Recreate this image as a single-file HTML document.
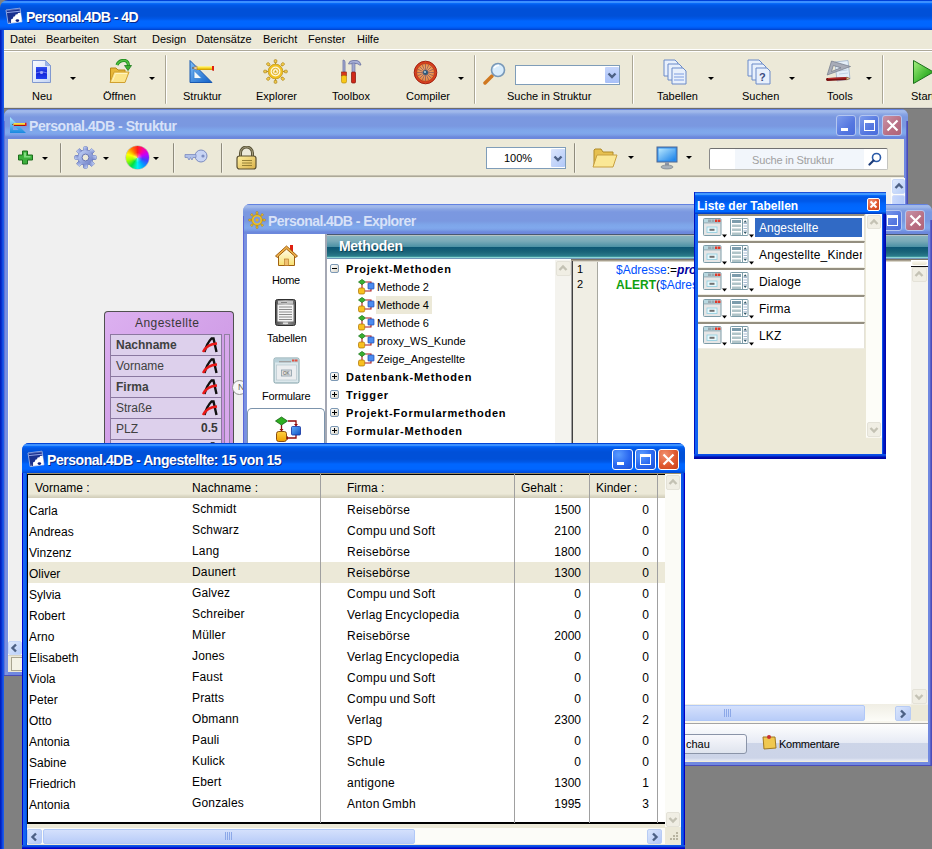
<!DOCTYPE html>
<html><head><meta charset="utf-8">
<style>
*{margin:0;padding:0;box-sizing:border-box}
html,body{width:932px;height:849px;overflow:hidden;background:#808080;font-family:"Liberation Sans",sans-serif;font-size:11px;color:#000}
.a{position:absolute}
.t{position:absolute;white-space:nowrap;line-height:1}
/* main window */
#mtitle{left:0;top:0;width:932px;height:30px;border-top-left-radius:8px;background:linear-gradient(#0040d8 0,#0040d8 1px,#3c90ff 1px,#3c90ff 3px,#0a70ff 3px,#0058e8 5px,#0050d8 9px,#0050d8 16px,#0058e8 19px,#0066ff 21px,#0066ff 26px,#0058f0 28px,#0040c8 30px)}
#mleft{left:0;top:30px;width:4px;height:819px;background:linear-gradient(90deg,#0019b0,#0a36d8 2px,#1a5ae8 3px)}
#menu{left:4px;top:30px;width:928px;height:22px;background:#ece9d8}
#tbar{left:4px;top:52px;width:928px;height:56px;background:#ece9d8}
.sep{position:absolute;width:2px;border-radius:1px;background:linear-gradient(90deg,#8e8b7c 1px,#f4f2e8 1px)}
.arr{position:absolute;width:0;height:0;border-left:3px solid transparent;border-right:3px solid transparent;border-top:3px solid #000}

.ib{position:absolute;width:20px;height:21px;border:1px solid #b4c6f0;border-radius:3px;background:linear-gradient(135deg,#7d9cec,#5577e0 60%,#4a6cdc)}
.ibc{background:linear-gradient(135deg,#c893a8,#b86e82 60%,#b06478)}
.ab{position:absolute;width:21px;height:21px;border:1px solid #fff;border-radius:3px;background:radial-gradient(circle at 30% 25%,#5a9cff,#2a68f0 55%,#1c50d8)}
.abc{background:radial-gradient(circle at 30% 25%,#f09070,#e05a30 55%,#c8401a)}
.gmin{position:absolute;background:#fff}
.ititle{background:linear-gradient(#6282e0 0,#6282e0 1px,#a0b8ea 1px,#a0b8ea 3px,#8aa6e4 5px,#7b98e0 8px,#7a98e0 17px,#7ea6ea 21px,#80a8ec 24px,#7a9ee6 26px,#6c88dc 28px,#6c88dc 30px)}
.iframe{background:linear-gradient(90deg,#6a80dc 0,#7c94e0 1px,#7c94e0 100%)}
.xx{position:absolute}


.atitle{background:linear-gradient(#0044d8 0,#0044d8 1px,#3c90ff 1px,#3c90ff 3px,#0a70ff 3px,#0058e8 5px,#0050d8 9px,#0050d8 16px,#0058e8 19px,#0066ff 21px,#0066ff 26px,#0058f0 28px,#0048d0 30px)}
.pal1{fill:#e8ecec}

.lbl{position:absolute;white-space:nowrap;line-height:1;font-size:11px;margin-top:1px}
</style></head><body>

<!-- MAIN WINDOW -->
<div id="mtitle" class="a"></div>
<div class="t" style="left:26px;top:10px;font-size:14px;letter-spacing:-0.55px;font-weight:bold;color:#fff;text-shadow:1px 1px 0 #0a2a8a">Personal.4DB - 4D</div>
<div id="mleft" class="a"></div>
<div id="menu" class="a"></div>
<div class="a" style="left:4px;top:49px;width:928px;height:3px;background:linear-gradient(#fff 1px,#aca899 1px,#aca899 2px,#fff 2px)"></div>
<div class="t" style="left:10px;top:34px">Datei</div>
<div class="t" style="left:46px;top:34px">Bearbeiten</div>
<div class="t" style="left:113px;top:34px">Start</div>
<div class="t" style="left:152px;top:34px">Design</div>
<div class="t" style="left:196px;top:34px">Datensätze</div>
<div class="t" style="left:263px;top:34px">Bericht</div>
<div class="t" style="left:308px;top:34px">Fenster</div>
<div class="t" style="left:357px;top:34px">Hilfe</div>

<div id="tbar" class="a"></div>
<div class="a" style="left:4px;top:107px;width:928px;height:1px;background:#d8d6cc"></div><div class="a" style="left:4px;top:108px;width:928px;height:1px;background:#6c6c6c"></div>


<!-- STRUKTUR WINDOW -->
<div class="a" style="left:4px;top:109px;width:904px;height:567px;background:#7c94e0;border-radius:7px 7px 0 0"></div>
<div class="a ititle" style="left:4px;top:109px;width:904px;height:30px;border-radius:7px 7px 0 0"></div>

<div class="a" style="left:4px;top:121px;width:1px;height:555px;background:#6070d8"></div>
<div class="a" style="left:5px;top:139px;width:3px;height:533px;background:#7890e0"></div>
<div class="a" style="left:904px;top:139px;width:2px;height:536px;background:#7088e0"></div>
<div class="a" style="left:906px;top:121px;width:1px;height:555px;background:#5a64c8"></div>
<div class="a" style="left:907px;top:121px;width:1px;height:555px;background:#4a4cb8"></div>
<div class="a" style="left:8px;top:672px;width:898px;height:3px;background:#7088e0"></div>
<div class="a" style="left:4px;top:675px;width:904px;height:1px;background:#4a4cb8"></div>

<svg class="a" style="left:9px;top:116px" width="19" height="18" viewBox="0 0 19 18"><defs><linearGradient id="sq2" x1="0" y1="0" x2="0" y2="1"><stop offset="0" stop-color="#b0e8ff"/><stop offset="1" stop-color="#1888e0"/></linearGradient></defs><path d="M1 1 L17 17 H1 Z M4 8.5 V14 H9.5 Z" fill="url(#sq2)" fill-rule="evenodd"/><path d="M5 7 H17 V9.5 H5Z" fill="#f8e040"/><path d="M5 8.8 H17 V10 H5Z" fill="#b01008"/><path d="M16 6.8 H17.5 V10 H16Z" fill="#e01818"/><path d="M5 7 L3 8.4 L5 10Z" fill="#c8a060"/><path d="M2.8 8.4 L3.8 7.9 V8.9Z" fill="#202020"/></svg>
<div class="t" style="left:29px;top:119px;font-size:14px;letter-spacing:-0.45px;font-weight:bold;color:#d8e2f8">Personal.4DB - Struktur</div>
<div class="ib" style="left:836px;top:115px"></div><div class="gmin" style="left:841px;top:128px;width:7px;height:3px"></div>
<div class="ib" style="left:859px;top:115px"></div><div class="a" style="left:864px;top:120px;width:11px;height:11px;border:1px solid #fff;border-top-width:3px"></div>
<div class="ib ibc" style="left:882px;top:115px"></div>
<svg class="a" style="left:886px;top:119px" width="13" height="13" viewBox="0 0 13 13"><path d="M1.5 1.5 L11.5 11.5 M11.5 1.5 L1.5 11.5" stroke="#fff" stroke-width="2.2"/></svg>
<!-- struktur toolbar -->
<div class="a" style="left:8px;top:139px;width:896px;height:36px;background:#ece9d8"></div>
<div class="a" style="left:8px;top:175px;width:896px;height:3px;background:linear-gradient(#c4c0b0 0,#c4c0b0 1px,#aca898 1px,#aca898 2px,#f0eee2 2px)"></div>
<svg class="a" style="left:17px;top:150px" width="17" height="15" viewBox="0 0 17 15"><path d="M5.5 1 H10.5 V5 H15.5 V10 H10.5 V14 H5.5 V10 H1.5 V5 H5.5 Z" fill="#3cb03c" stroke="#1e6e1e" stroke-linejoin="round"/><path d="M7 2.5 H9 V6 H13.5 V7.5 H7Z" fill="#80dc80"/></svg>
<div class="arr" style="left:42px;top:157px"></div>
<div class="sep" style="left:60px;top:143px;height:30px"></div>
<svg class="a" style="left:74px;top:146px" width="23" height="23" viewBox="0 0 23 23"><defs><linearGradient id="gg" x1="0" y1="0" x2="1" y2="1"><stop offset="0" stop-color="#c4d4f8"/><stop offset="1" stop-color="#6c7cc4"/></linearGradient></defs><g fill="url(#gg)" stroke="#5c6cb0" stroke-width=".8"><rect x="9.5" y="0.8" width="4" height="5" rx=".8" transform="rotate(0 11.5 11.5)"/><rect x="9.5" y="0.8" width="4" height="5" rx=".8" transform="rotate(45 11.5 11.5)"/><rect x="9.5" y="0.8" width="4" height="5" rx=".8" transform="rotate(90 11.5 11.5)"/><rect x="9.5" y="0.8" width="4" height="5" rx=".8" transform="rotate(135 11.5 11.5)"/><rect x="9.5" y="0.8" width="4" height="5" rx=".8" transform="rotate(180 11.5 11.5)"/><rect x="9.5" y="0.8" width="4" height="5" rx=".8" transform="rotate(225 11.5 11.5)"/><rect x="9.5" y="0.8" width="4" height="5" rx=".8" transform="rotate(270 11.5 11.5)"/><rect x="9.5" y="0.8" width="4" height="5" rx=".8" transform="rotate(315 11.5 11.5)"/><circle cx="11.5" cy="11.5" r="7.6"/></g><g fill="url(#gg)"><rect x="9.5" y="0.8" width="4" height="5" rx=".8" transform="rotate(0 11.5 11.5)" stroke="none"/><rect x="9.5" y="0.8" width="4" height="5" rx=".8" transform="rotate(45 11.5 11.5)" stroke="none"/><rect x="9.5" y="0.8" width="4" height="5" rx=".8" transform="rotate(90 11.5 11.5)" stroke="none"/><rect x="9.5" y="0.8" width="4" height="5" rx=".8" transform="rotate(135 11.5 11.5)" stroke="none"/><rect x="9.5" y="0.8" width="4" height="5" rx=".8" transform="rotate(180 11.5 11.5)" stroke="none"/><rect x="9.5" y="0.8" width="4" height="5" rx=".8" transform="rotate(225 11.5 11.5)" stroke="none"/><rect x="9.5" y="0.8" width="4" height="5" rx=".8" transform="rotate(270 11.5 11.5)" stroke="none"/><rect x="9.5" y="0.8" width="4" height="5" rx=".8" transform="rotate(315 11.5 11.5)" stroke="none"/></g><circle cx="11.5" cy="11.5" r="7.2" fill="url(#gg)"/><circle cx="11.5" cy="11.5" r="3.4" fill="#ece9d8" stroke="#5c6cb0" stroke-width=".9"/></svg>
<div class="arr" style="left:103px;top:157px"></div>
<div class="a" style="left:126px;top:146px;width:23px;height:23px;border-radius:50%;background:radial-gradient(circle,rgba(255,255,255,.45) 0,rgba(255,255,255,0) 30%),conic-gradient(#ff2020,#ff00a0,#c000ff,#4040ff,#00a0ff,#00f0f0,#00e040,#a0ff00,#ffff00,#ff8000,#ff2020);box-shadow:0 0 0 .5px rgba(80,80,80,.4)"></div>
<div class="arr" style="left:153px;top:157px"></div>
<div class="sep" style="left:173px;top:143px;height:30px"></div>
<svg class="a" style="left:184px;top:149px" width="24" height="15" viewBox="0 0 24 15"><circle cx="17" cy="7" r="6" fill="#c8d4f4" stroke="#7c8cc0"/><circle cx="19" cy="7" r="1.6" fill="#7c8cc0"/><path d="M1 5.5 H12 V8.5 H9 L8 11 L6.5 8.5 L5 11 L3.5 8.5 H1Z" fill="#b0c0e8" stroke="#7c8cc0" stroke-width=".8"/></svg>
<div class="sep" style="left:221px;top:143px;height:30px"></div>
<svg class="a" style="left:236px;top:146px" width="21" height="24" viewBox="0 0 21 24"><defs><linearGradient id="lk" x1="0" y1="0" x2="1" y2="1"><stop offset="0" stop-color="#fff0a0"/><stop offset="1" stop-color="#d8b048"/></linearGradient></defs><path d="M4.5 11 V7 A6 6 0 0 1 16.5 7 V11" fill="none" stroke="#5a5438" stroke-width="3"/><path d="M4.5 11 V7 A6 6 0 0 1 16.5 7 V11" fill="none" stroke="#a8a080" stroke-width="1"/><rect x="1" y="10" width="19" height="13" rx="2.5" fill="url(#lk)" stroke="#5a5030" stroke-width="1.2"/><path d="M6 14.5 H16 M6 17 H16 M6 19.5 H16" stroke="#8c7830" stroke-width=".9"/></svg>
<div class="a" style="left:486px;top:147px;width:80px;height:22px;border:1px solid #7f9db9;background:#fff"></div>
<div class="t" style="left:504px;top:153px;font-size:11px">100%</div>
<div class="a" style="left:551px;top:149px;width:14px;height:18px;background:linear-gradient(135deg,#dce6fc,#b0c8f8);border-radius:1px"></div>
<svg class="a" style="left:553px;top:155px" width="10" height="7" viewBox="0 0 10 7"><path d="M1.5 1.5 L5 5 L8.5 1.5" stroke="#4d6185" stroke-width="2.4" fill="none"/></svg>
<div class="sep" style="left:574px;top:143px;height:30px"></div>
<svg class="a" style="left:592px;top:146px" width="26" height="22" viewBox="0 0 26 22"><path d="M2 4 V19 H21 V6 H11 L9 3 H3Z" fill="#e6c050" stroke="#b08a28"/><path d="M5 9 H25 L21 21 H1 Z" fill="#fbe896" stroke="#c8a040"/></svg>
<div class="arr" style="left:628px;top:156px"></div>
<svg class="a" style="left:655px;top:146px" width="24" height="24" viewBox="0 0 24 24"><rect x="2" y="1" width="20" height="15" fill="#3090f0" stroke="#506890"/><rect x="3.5" y="2.5" width="17" height="12" fill="url(#mong)"/><defs><linearGradient id="mong" x1="0" y1="0" x2="1" y2="1"><stop offset="0" stop-color="#b8e8ff"/><stop offset="1" stop-color="#1880e8"/></linearGradient></defs><rect x="10" y="16" width="4" height="4" fill="#9098a8"/><ellipse cx="12" cy="21" rx="6" ry="2" fill="#a8b0b8" stroke="#707880" stroke-width=".6"/></svg>
<div class="arr" style="left:686px;top:156px"></div>
<div class="a" style="left:709px;top:148px;width:179px;height:22px;border:1px solid #c4c4c0;border-top-color:#707070;border-left-color:#8a8a8a;border-radius:2px;background:linear-gradient(90deg,#fff 0,#fff 25px,#f2f6fb 25px,#f2f6fb 154px,#fff 154px)"></div>
<div class="t" style="left:752px;top:155px;font-size:11px;letter-spacing:-0.15px;color:#a0a0a0">Suche in Struktur</div>
<svg class="a" style="left:868px;top:152px" width="14" height="14" viewBox="0 0 14 14"><circle cx="8.5" cy="5.5" r="4" fill="none" stroke="#2a5aa8" stroke-width="1.6"/><path d="M5.5 8.5 L1.5 12.5" stroke="#1a3a78" stroke-width="2.2" stroke-linecap="round"/></svg>
<!-- struktur content -->
<div class="a" style="left:8px;top:178px;width:896px;height:463px;background:#f0f0f0;border-left:1px solid #fbfaf4"></div>
<div class="a" style="left:891px;top:178px;width:14px;height:463px;background:#fcfcfa"></div>
<div class="a" style="left:892px;top:179px;width:13px;height:15px;border-radius:2px;background:linear-gradient(135deg,#e0eafc,#b8cef8);border:1px solid #c8d8f8"></div>
<svg class="a" style="left:894px;top:182px" width="10" height="8" viewBox="0 0 10 8"><path d="M1.5 6 L5 2.5 L8.5 6" stroke="#4d6185" stroke-width="2.4" fill="none"/></svg>
<div class="a" style="left:892px;top:195px;width:13px;height:40px;border-radius:2px;background:linear-gradient(90deg,#c8d8fc,#b8ccf8);border:1px solid #d0dcfa"></div>
<div class="a" style="left:8px;top:641px;width:896px;height:14px;background:#fcfcfa"></div>
<div class="a" style="left:8px;top:641px;width:14px;height:14px;border-radius:2px;background:linear-gradient(135deg,#e0eafc,#b8cef8);border:1px solid #c8d8f8"></div>
<svg class="a" style="left:10px;top:643px" width="8" height="10" viewBox="0 0 8 10"><path d="M6 1.5 L2.5 5 L6 8.5" stroke="#4d6185" stroke-width="2.4" fill="none"/></svg>
<div class="a" style="left:8px;top:655px;width:896px;height:17px;background:#ece9d8;border-top:1px solid #d8d4c4"></div>
<div class="a" style="left:11px;top:657px;width:13px;height:14px;border:1px solid #a8a490;background:#f4f2e6"></div>



<!-- purple table -->
<div class="a" style="left:104px;top:311px;width:130px;height:140px;border:1px solid #505050;border-bottom:none;border-radius:4px 4px 0 0;background:linear-gradient(135deg,#dcb0f0,#c890e0)"></div>
<div class="t" style="left:135px;top:317px;font-size:12px;letter-spacing:0.45px;color:#383838">Angestellte</div>
<div class="a" style="left:110px;top:334px;width:112px;height:120px;background:#ddd0ec;border:1px solid #8c78a0"></div>
<div class="a" style="left:224px;top:334px;width:6px;height:120px;background:#d8a8ec;border:1px solid #9080a0"></div>
<div class="t" style="left:116px;top:339px;font-size:12px;color:#404040;font-weight:bold">Nachname</div>
<svg class="a" style="left:202px;top:337px" width="16" height="16" viewBox="0 0 16 16"><path d="M2.5 15 Q5 6 9.5 1.5 L11.5 1.5 L14.5 15" fill="none" stroke="#101010" stroke-width="2.4"/><path d="M1 15 Q5 7 15 6.5" fill="none" stroke="#e81818" stroke-width="2.4"/></svg>
<div class="a" style="left:111px;top:355px;width:110px;height:1px;background:#8a78a0"></div>
<div class="t" style="left:116px;top:360px;font-size:12px;color:#404040;">Vorname</div>
<svg class="a" style="left:202px;top:358px" width="16" height="16" viewBox="0 0 16 16"><path d="M2.5 15 Q5 6 9.5 1.5 L11.5 1.5 L14.5 15" fill="none" stroke="#101010" stroke-width="2.4"/><path d="M1 15 Q5 7 15 6.5" fill="none" stroke="#e81818" stroke-width="2.4"/></svg>
<div class="a" style="left:111px;top:376px;width:110px;height:1px;background:#8a78a0"></div>
<div class="t" style="left:116px;top:381px;font-size:12px;color:#404040;font-weight:bold">Firma</div>
<svg class="a" style="left:202px;top:379px" width="16" height="16" viewBox="0 0 16 16"><path d="M2.5 15 Q5 6 9.5 1.5 L11.5 1.5 L14.5 15" fill="none" stroke="#101010" stroke-width="2.4"/><path d="M1 15 Q5 7 15 6.5" fill="none" stroke="#e81818" stroke-width="2.4"/></svg>
<div class="a" style="left:111px;top:397px;width:110px;height:1px;background:#8a78a0"></div>
<div class="t" style="left:116px;top:402px;font-size:12px;color:#404040;">Straße</div>
<svg class="a" style="left:202px;top:400px" width="16" height="16" viewBox="0 0 16 16"><path d="M2.5 15 Q5 6 9.5 1.5 L11.5 1.5 L14.5 15" fill="none" stroke="#101010" stroke-width="2.4"/><path d="M1 15 Q5 7 15 6.5" fill="none" stroke="#e81818" stroke-width="2.4"/></svg>
<div class="a" style="left:111px;top:418px;width:110px;height:1px;background:#8a78a0"></div>
<div class="t" style="left:116px;top:423px;font-size:12px;color:#404040;">PLZ</div>
<div class="t" style="left:201px;top:422px;font-size:12px;font-weight:bold;color:#383838">0.5</div>
<svg class="a" style="left:202px;top:442px" width="16" height="16" viewBox="0 0 16 16"><path d="M2.5 15 Q5 6 9.5 1.5 L11.5 1.5 L14.5 15" fill="none" stroke="#101010" stroke-width="2.4"/></svg>
<div class="a" style="left:111px;top:439px;width:110px;height:1px;background:#8a78a0"></div>
<div class="a" style="left:232px;top:380px;width:15px;height:15px;border:1px solid #909090;border-radius:8px;background:#f8f8f8"></div><div class="t" style="left:238px;top:383px;font-size:9px;color:#606060">N</div>

<!-- EXPLORER WINDOW -->
<div class="a" style="left:243px;top:204px;width:689px;height:562px;background:#7c94e0;border-radius:7px 7px 0 0"></div>
<div class="a ititle" style="left:243px;top:204px;width:689px;height:30px;border-radius:7px 7px 0 0"></div>

<div class="a" style="left:243px;top:216px;width:1px;height:550px;background:#5a68d8"></div>
<div class="a" style="left:244px;top:234px;width:3px;height:528px;background:#7890e0"></div>
<div class="a" style="left:928px;top:234px;width:2px;height:531px;background:#7088e0"></div>
<div class="a" style="left:930px;top:220px;width:1px;height:546px;background:#5a64c8"></div>
<div class="a" style="left:931px;top:220px;width:1px;height:546px;background:#4a4cb8"></div>
<div class="a" style="left:247px;top:762px;width:683px;height:3px;background:#7088e0"></div>
<div class="a" style="left:243px;top:765px;width:689px;height:1px;background:#4a4cb8"></div>

<svg class="a" style="left:248px;top:211px" width="18" height="18" viewBox="0 0 18 18"><path d="M9.00 4.00 L9.00 1.80" stroke="#b88810" stroke-width="1"/><rect x="8.00" y="0.60" width="2" height="2.4" rx=".7" transform="rotate(0 9.00 1.80)" fill="#f0c030" stroke="#a07810" stroke-width=".5"/><path d="M12.54 5.46 L14.09 3.91" stroke="#b88810" stroke-width="1"/><rect x="13.09" y="2.71" width="2" height="2.4" rx=".7" transform="rotate(45 14.09 3.91)" fill="#f0c030" stroke="#a07810" stroke-width=".5"/><path d="M14.00 9.00 L16.20 9.00" stroke="#b88810" stroke-width="1"/><rect x="15.20" y="7.80" width="2" height="2.4" rx=".7" transform="rotate(90 16.20 9.00)" fill="#f0c030" stroke="#a07810" stroke-width=".5"/><path d="M12.54 12.54 L14.09 14.09" stroke="#b88810" stroke-width="1"/><rect x="13.09" y="12.89" width="2" height="2.4" rx=".7" transform="rotate(135 14.09 14.09)" fill="#f0c030" stroke="#a07810" stroke-width=".5"/><path d="M9.00 14.00 L9.00 16.20" stroke="#b88810" stroke-width="1"/><rect x="8.00" y="15.00" width="2" height="2.4" rx=".7" transform="rotate(180 9.00 16.20)" fill="#f0c030" stroke="#a07810" stroke-width=".5"/><path d="M5.46 12.54 L3.91 14.09" stroke="#b88810" stroke-width="1"/><rect x="2.91" y="12.89" width="2" height="2.4" rx=".7" transform="rotate(225 3.91 14.09)" fill="#f0c030" stroke="#a07810" stroke-width=".5"/><path d="M4.00 9.00 L1.80 9.00" stroke="#b88810" stroke-width="1"/><rect x="0.80" y="7.80" width="2" height="2.4" rx=".7" transform="rotate(270 1.80 9.00)" fill="#f0c030" stroke="#a07810" stroke-width=".5"/><path d="M5.46 5.46 L3.91 3.91" stroke="#b88810" stroke-width="1"/><rect x="2.91" y="2.71" width="2" height="2.4" rx=".7" transform="rotate(315 3.91 3.91)" fill="#f0c030" stroke="#a07810" stroke-width=".5"/><circle cx="9" cy="9" r="4.4" fill="none" stroke="#f0c020" stroke-width="2"/><circle cx="9" cy="9" r="5.4" fill="none" stroke="#a88010" stroke-width=".5"/><circle cx="9" cy="9" r="1.5" fill="#e8b020"/></svg>
<div class="t" style="left:268px;top:214px;font-size:14px;letter-spacing:-0.55px;font-weight:bold;color:#d8e2f8">Personal.4DB - Explorer</div>
<div class="ib" style="left:882px;top:210px"></div><div class="a" style="left:887px;top:215px;width:11px;height:11px;border:1px solid #fff;border-top-width:3px"></div>
<div class="ib ibc" style="left:905px;top:210px"></div>
<svg class="a" style="left:909px;top:214px" width="13" height="13" viewBox="0 0 13 13"><path d="M1.5 1.5 L11.5 11.5 M11.5 1.5 L1.5 11.5" stroke="#fff" stroke-width="2.2"/></svg>
<!-- sidebar -->
<div class="a" style="left:247px;top:234px;width:80px;height:489px;background:#fff;border-right:2px solid #a4a8b4"></div>
<svg class="a" style="left:274px;top:244px" width="25" height="23" viewBox="0 0 25 23"><rect x="16" y="1" width="3" height="7" fill="#e02010"/><path d="M12.5 2 L1.5 12 L3.5 13.5 L12.5 5.5 L21.5 13.5 L23.5 12Z" fill="#f0b048" stroke="#a06010" stroke-width="1"/><path d="M4.5 12 V21.5 H20.5 V12 L12.5 5Z" fill="url(#hg)" stroke="#a06010" stroke-width="1"/><defs><linearGradient id="hg" x1="0" y1="0" x2="0" y2="1"><stop offset="0" stop-color="#fffce8"/><stop offset="1" stop-color="#f8e070"/></linearGradient></defs><rect x="10.5" y="15" width="4" height="6.5" fill="#f0c070" stroke="#b07020" stroke-width=".6"/></svg>
<div class="t" style="left:272px;top:275px;font-size:11px;letter-spacing:-0.4px">Home</div>
<svg class="a" style="left:275px;top:299px" width="22" height="28" viewBox="0 0 22 28"><defs><linearGradient id="tbg" x1="0" y1="0" x2="1" y2="0"><stop offset="0" stop-color="#505050"/><stop offset=".5" stop-color="#9a9a9a"/><stop offset="1" stop-color="#606060"/></linearGradient></defs><rect x=".5" y=".5" width="20" height="26" rx="2" fill="url(#tbg)" stroke="#303030"/><rect x="2.5" y="5.5" width="16" height="17" fill="#f4f4f4"/><path d="M4 8H17M4 10.5H17M4 13H17M4 15.5H17M4 18H17M4 20.5H17" stroke="#8a8a8a" stroke-width="1"/><rect x="3" y="1.8" width="15" height="3" fill="#c8c8c8"/><path d="M6 3.5 H12" stroke="#707070" stroke-width=".8"/><rect x="8" y="23.5" width="5" height="1.5" fill="#e0e0e0"/></svg>
<div class="t" style="left:267px;top:333px;font-size:11px;letter-spacing:-0.15px">Tabellen</div>
<svg class="a" style="left:273px;top:357px" width="27" height="27" viewBox="0 0 27 27"><rect x="1" y="1" width="25" height="25" rx="1.5" fill="#dce8ec" stroke="#80a0a8"/><rect x="1.5" y="1.5" width="24" height="4" fill="#b8d0d8"/><rect x="6" y="4" width="12" height="1.3" fill="#a0a0a0"/><rect x="19" y="2.5" width="2.5" height="2" fill="#e05040"/><rect x="22" y="2.5" width="2.5" height="2" fill="#e05040"/><rect x="3.5" y="8" width="20" height="15" fill="#eceef0" stroke="#b0c0c8" stroke-width=".6"/><rect x="8.5" y="13" width="10" height="6" fill="#e0e0e0" stroke="#8a9ca8" stroke-width=".8"/><text x="10" y="18" font-size="4.5" fill="#505050" font-family="Liberation Sans">OK</text></svg>
<div class="t" style="left:262px;top:391px;font-size:11px;letter-spacing:-0.2px">Formulare</div>
<div class="a" style="left:247px;top:408px;width:78px;height:40px;border:1px solid #7c94ac;border-bottom:none;border-radius:5px 5px 0 0;background:#fff"></div>
<svg class="a" style="left:274px;top:416px" width="28" height="27" viewBox="0 0 28 27"><defs><linearGradient id="bg1" x1="0" y1="0" x2="1" y2="1"><stop offset="0" stop-color="#60b0ff"/><stop offset="1" stop-color="#1050c0"/></linearGradient><linearGradient id="yg1" x1="0" y1="0" x2="0" y2="1"><stop offset="0" stop-color="#ffd040"/><stop offset="1" stop-color="#f0a000"/></linearGradient></defs><path d="M14 5 H22 V9.5 M7.5 9 V14.5 M22 19 V22 H13.5" stroke="#900c0c" stroke-width="1.3" fill="none"/><path d="M20 8 L22 10.5 L24 8Z M5.5 13 L7.5 15.5 L9.5 13Z M14 20 L11.5 22 L14 24Z" fill="#900c0c"/><path d="M1.5 5 L7.5 1 L13.5 5 L7.5 9 Z" fill="#30b020" stroke="#106010" stroke-width=".8"/><rect x="17.5" y="10.5" width="9" height="8.5" rx="1" fill="url(#bg1)" stroke="#1030a0" stroke-width=".8"/><rect x="2.5" y="15.5" width="10" height="10" rx="2.2" fill="url(#yg1)" stroke="#804000" stroke-width=".9"/></svg>
<!-- header -->
<div class="a" style="left:327px;top:234px;width:601px;height:25px;background:linear-gradient(#4a5870 0,#4a5870 1px,#b8c4c4 1px,#b8c4c4 2px,#88b4c0 2px,#7aaab8 7px,#4a90a4 13px,#0c5674 13px,#1a6478 18px,#2a7a8a 22px,#3a9098 22px,#3a9098 23px,#8cd4d4 23px,#8cd4d4 24px,#7098b8 24px,#7098b8 25px)"></div>
<div class="t" style="left:339px;top:239px;font-size:14px;font-weight:bold;letter-spacing:-0.3px;color:#fff;text-shadow:1px 1px 0 rgba(10,50,70,.6)">Methoden</div>
<!-- tree -->
<div class="a" style="left:327px;top:259px;width:228px;height:446px;background:#fff"></div>
<div class="a" style="left:330px;top:264px;width:9px;height:9px;border:1px solid #7c98b4;border-radius:2px;background:linear-gradient(135deg,#fff,#d8d4c8)"></div><div class="a" style="left:332px;top:268px;width:5px;height:1px;background:#000"></div>
<div class="t" style="left:346px;top:264px;font-size:11px;font-weight:bold;letter-spacing:0.8px">Projekt-Methoden</div>
<svg class="a" style="left:358px;top:279px" width="17" height="16" viewBox="0 0 17 16"><path d="M4 5 V9 M7.5 3 H13 V4.5 M13 10 V12 H6.5" stroke="#b01818" stroke-width="1.1" fill="none"/><path d="M.5 3 L4 .4 L7.5 3 L4 5.6Z" fill="#38b030" stroke="#147014" stroke-width=".7"/><rect x="10" y="4" width="6" height="6" rx=".6" fill="#4c8cf0" stroke="#1c48b0" stroke-width=".7"/><rect x=".5" y="9" width="6.2" height="6" rx="1.6" fill="#f8c020" stroke="#a87000" stroke-width=".7"/></svg>
<div class="t" style="left:377px;top:282px;font-size:11px">Methode 2</div>
<svg class="a" style="left:358px;top:297px" width="17" height="16" viewBox="0 0 17 16"><path d="M4 5 V9 M7.5 3 H13 V4.5 M13 10 V12 H6.5" stroke="#b01818" stroke-width="1.1" fill="none"/><path d="M.5 3 L4 .4 L7.5 3 L4 5.6Z" fill="#38b030" stroke="#147014" stroke-width=".7"/><rect x="10" y="4" width="6" height="6" rx=".6" fill="#4c8cf0" stroke="#1c48b0" stroke-width=".7"/><rect x=".5" y="9" width="6.2" height="6" rx="1.6" fill="#f8c020" stroke="#a87000" stroke-width=".7"/></svg>
<div class="a" style="left:376px;top:296px;width:56px;height:18px;background:#ece9d8"></div>
<div class="t" style="left:377px;top:300px;font-size:11px">Methode 4</div>
<svg class="a" style="left:358px;top:315px" width="17" height="16" viewBox="0 0 17 16"><path d="M4 5 V9 M7.5 3 H13 V4.5 M13 10 V12 H6.5" stroke="#b01818" stroke-width="1.1" fill="none"/><path d="M.5 3 L4 .4 L7.5 3 L4 5.6Z" fill="#38b030" stroke="#147014" stroke-width=".7"/><rect x="10" y="4" width="6" height="6" rx=".6" fill="#4c8cf0" stroke="#1c48b0" stroke-width=".7"/><rect x=".5" y="9" width="6.2" height="6" rx="1.6" fill="#f8c020" stroke="#a87000" stroke-width=".7"/></svg>
<div class="t" style="left:377px;top:318px;font-size:11px">Methode 6</div>
<svg class="a" style="left:358px;top:333px" width="17" height="16" viewBox="0 0 17 16"><path d="M4 5 V9 M7.5 3 H13 V4.5 M13 10 V12 H6.5" stroke="#b01818" stroke-width="1.1" fill="none"/><path d="M.5 3 L4 .4 L7.5 3 L4 5.6Z" fill="#38b030" stroke="#147014" stroke-width=".7"/><rect x="10" y="4" width="6" height="6" rx=".6" fill="#4c8cf0" stroke="#1c48b0" stroke-width=".7"/><rect x=".5" y="9" width="6.2" height="6" rx="1.6" fill="#f8c020" stroke="#a87000" stroke-width=".7"/></svg>
<div class="t" style="left:377px;top:336px;font-size:11px">proxy_WS_Kunde</div>
<svg class="a" style="left:358px;top:351px" width="17" height="16" viewBox="0 0 17 16"><path d="M4 5 V9 M7.5 3 H13 V4.5 M13 10 V12 H6.5" stroke="#b01818" stroke-width="1.1" fill="none"/><path d="M.5 3 L4 .4 L7.5 3 L4 5.6Z" fill="#38b030" stroke="#147014" stroke-width=".7"/><rect x="10" y="4" width="6" height="6" rx=".6" fill="#4c8cf0" stroke="#1c48b0" stroke-width=".7"/><rect x=".5" y="9" width="6.2" height="6" rx="1.6" fill="#f8c020" stroke="#a87000" stroke-width=".7"/></svg>
<div class="t" style="left:377px;top:354px;font-size:11px">Zeige_Angestellte</div>
<div class="a" style="left:330px;top:372px;width:9px;height:9px;border:1px solid #7c98b4;border-radius:2px;background:linear-gradient(135deg,#fff,#d8d4c8)"></div><div class="a" style="left:332px;top:376px;width:5px;height:1px;background:#000"></div><div class="a" style="left:334px;top:374px;width:1px;height:5px;background:#000"></div>
<div class="t" style="left:346px;top:372px;font-size:11px;font-weight:bold;letter-spacing:0.8px">Datenbank-Methoden</div>
<div class="a" style="left:330px;top:390px;width:9px;height:9px;border:1px solid #7c98b4;border-radius:2px;background:linear-gradient(135deg,#fff,#d8d4c8)"></div><div class="a" style="left:332px;top:394px;width:5px;height:1px;background:#000"></div><div class="a" style="left:334px;top:392px;width:1px;height:5px;background:#000"></div>
<div class="t" style="left:346px;top:390px;font-size:11px;font-weight:bold;letter-spacing:0.8px">Trigger</div>
<div class="a" style="left:330px;top:408px;width:9px;height:9px;border:1px solid #7c98b4;border-radius:2px;background:linear-gradient(135deg,#fff,#d8d4c8)"></div><div class="a" style="left:332px;top:412px;width:5px;height:1px;background:#000"></div><div class="a" style="left:334px;top:410px;width:1px;height:5px;background:#000"></div>
<div class="t" style="left:346px;top:408px;font-size:11px;font-weight:bold;letter-spacing:0.8px">Projekt-Formularmethoden</div>
<div class="a" style="left:330px;top:426px;width:9px;height:9px;border:1px solid #7c98b4;border-radius:2px;background:linear-gradient(135deg,#fff,#d8d4c8)"></div><div class="a" style="left:332px;top:430px;width:5px;height:1px;background:#000"></div><div class="a" style="left:334px;top:428px;width:1px;height:5px;background:#000"></div>
<div class="t" style="left:346px;top:426px;font-size:11px;font-weight:bold;letter-spacing:0.8px">Formular-Methoden</div>

<div class="a" style="left:555px;top:259px;width:17px;height:446px;background:#f4f3ee"></div>
<div class="a" style="left:556px;top:261px;width:15px;height:15px;border:1px solid #e4e2d8;border-radius:2px;background:#f0eee4"></div>
<svg class="a" style="left:558px;top:264px" width="10" height="8" viewBox="0 0 10 8"><path d="M1.5 6 L5 2.5 L8.5 6" stroke="#c4c2b4" stroke-width="2.4" fill="none"/></svg>
<div class="a" style="left:571px;top:260px;width:2px;height:445px;background:linear-gradient(90deg,#a0a0a0 1px,#404040 1px)"></div>
<div class="a" style="left:573px;top:262px;width:25px;height:443px;background:#f0eee4;border-right:1px solid #a8a8a0"></div>
<div class="a" style="left:555px;top:259px;width:16px;height:1px;background:#fff"></div>
<div class="a" style="left:571px;top:259px;width:357px;height:1px;background:#7a7264"></div>
<div class="a" style="left:571px;top:260px;width:340px;height:1px;background:#a8a090"></div>
<div class="a" style="left:573px;top:261px;width:338px;height:1px;background:#d8d4c8"></div>
<div class="t" style="left:577px;top:264px;font-size:11px">1</div>
<div class="t" style="left:577px;top:279px;font-size:11px">2</div>
<div class="a" style="left:598px;top:262px;width:313px;height:443px;background:#fff"></div>
<div class="t" style="left:616px;top:264px;font-size:12px;color:#0050ff">$Adresse<span style="color:#000">:=</span><b style="color:#0000a0;font-style:italic">proxy_WS_Kunde</b></div>
<div class="t" style="left:616px;top:279px;font-size:12px;color:#0050ff"><b style="color:#10a010">ALERT</b><span style="color:#000">(</span>$Adresse<span style="color:#000">)</span></div>
<div class="a" style="left:911px;top:260px;width:17px;height:7px;background:#fff;border-bottom:1.5px solid #101010"></div><div class="a" style="left:912px;top:261px;width:15px;height:4px;border-radius:2px;background:linear-gradient(#fcfaf0,#e8e4d0)"></div>
<div class="a" style="left:911px;top:267px;width:17px;height:438px;background:#f4f3ee"></div>
<div class="a" style="left:912px;top:267px;width:15px;height:15px;border:1px solid #e4e2d8;border-radius:2px;background:#f0eee4"></div>
<svg class="a" style="left:914px;top:270px" width="10" height="8" viewBox="0 0 10 8"><path d="M1.5 6 L5 2.5 L8.5 6" stroke="#c4c2b4" stroke-width="2.4" fill="none"/></svg>
<div class="a" style="left:912px;top:689px;width:15px;height:15px;border:1px solid #e4e2d8;border-radius:2px;background:#f0eee4"></div>
<svg class="a" style="left:914px;top:693px" width="10" height="8" viewBox="0 0 10 8"><path d="M1.5 2 L5 5.5 L8.5 2" stroke="#c4c2b4" stroke-width="2.4" fill="none"/></svg>
<div class="a" style="left:327px;top:704px;width:601px;height:17px;background:linear-gradient(#f0eee4,#fcfcf8)"></div>
<div class="a" style="left:600px;top:705px;width:265px;height:16px;border:1px solid #b0c8f8;border-radius:2px;background:linear-gradient(#d4e0fc,#b8ccf8)"></div>
<svg class="a" style="left:724px;top:709px" width="10" height="8" viewBox="0 0 10 8"><path d="M.5 0V8M2.5 0V8M4.5 0V8M6.5 0V8" stroke="#8ca8e8" stroke-width="1"/></svg>
<div class="a" style="left:895px;top:706px;width:16px;height:15px;border:1px solid #b8ccf4;border-radius:2px;background:linear-gradient(135deg,#dae6fc,#b4c8f6)"></div>
<svg class="a" style="left:899px;top:709px" width="8" height="10" viewBox="0 0 8 10"><path d="M2 1.5 L5.5 5 L2 8.5" stroke="#4d6185" stroke-width="2.4" fill="none"/></svg>
<div class="a" style="left:911px;top:705px;width:17px;height:16px;background:#ece9d8"></div>
<!-- status -->
<div class="a" style="left:247px;top:721px;width:681px;height:2px;background:#f8f6ee"></div><div class="a" style="left:247px;top:723px;width:681px;height:39px;border-top:1px solid #a4a4a4;background:linear-gradient(#fdfdfe 0,#f4f6fa 8px,#e6eaf4 19px,#cdd5e8 19px,#ccd4e8 34px,#dfe4f2 36px,#e2e6f4 37px,#f2eed8 37px,#f2eed8 38px)"></div>
<div class="a" style="left:620px;top:734px;width:127px;height:20px;border:1px solid #8a94a8;border-radius:3px;background:linear-gradient(#f8f8fc,#dfe4ee)"></div>
<div class="t" style="left:686px;top:739px;font-size:11px">chau</div>
<svg class="a" style="left:762px;top:734px" width="15" height="16" viewBox="0 0 15 16"><path d="M1 3 H13 L14 14 L2 15Z" fill="#f0c850" stroke="#a07820"/><circle cx="7" cy="3" r="2" fill="#c83030"/></svg>
<div class="t" style="left:779px;top:739px;font-size:11px;letter-spacing:-0.25px">Kommentare</div>


<!-- PALETTE -->
<div class="a" style="left:694px;top:192px;width:192px;height:267px;background:#0848d8"></div>
<div class="a atitle" style="left:694px;top:192px;width:192px;height:22px;background:linear-gradient(#1a50d8 0,#1a50d8 1px,#4098ff 1px,#4098ff 3px,#0a70ff 3px,#0058e8 5px,#0058e8 9px,#0064fa 12px,#0068ff 16px,#0068ff 20px,#0040c8 21px,#0040c8 22px)"></div>
<div class="a" style="left:694px;top:214px;width:4px;height:245px;background:linear-gradient(90deg,#0010c0 0,#0010c0 1px,#1060f0 1px)"></div><div class="a" style="left:694px;top:192px;width:1px;height:22px;background:#0020d0"></div>
<div class="a" style="left:882px;top:214px;width:4px;height:245px;background:linear-gradient(90deg,#0a50e8 0,#0a50e8 1px,#0020c8 1px,#0010b8 3px,#0000a8 4px)"></div>
<div class="a" style="left:694px;top:454px;width:192px;height:5px;background:linear-gradient(#0a50e8 0,#0a50e8 1px,#0838d8 2px,#0010b0 3px,#0000a0 5px)"></div>
<div class="t" style="left:697px;top:200px;font-size:12px;font-weight:bold;color:#fff">Liste der Tabellen</div>
<div class="a" style="left:867px;top:198px;width:13px;height:13px;border:1px solid #fff;border-radius:2px;background:radial-gradient(circle at 30% 25%,#f09070,#e05a30 55%,#c8401a)"></div>
<svg class="a" style="left:869px;top:200px" width="9" height="9" viewBox="0 0 9 9"><path d="M1.5 1.5 L7.5 7.5 M7.5 1.5 L1.5 7.5" stroke="#fff" stroke-width="2"/></svg>
<div class="a" style="left:698px;top:214px;width:184px;height:240px;background:#ece9d8"></div>
<div class="a" style="left:866px;top:214px;width:16px;height:224px;background:#fdfdf8;border-bottom:1px solid #f8f6ee"></div>
<div class="a" style="left:867px;top:215px;width:14px;height:14px;border:1px solid #e4e2d8;border-radius:2px;background:#f0eee4"></div>
<svg class="a" style="left:869px;top:218px" width="10" height="8" viewBox="0 0 10 8"><path d="M1.5 6 L5 2.5 L8.5 6" stroke="#c4c2b4" stroke-width="2.4" fill="none"/></svg>
<div class="a" style="left:867px;top:422px;width:14px;height:15px;border:1px solid #e4e2d8;border-radius:2px;background:#f0eee4"></div>
<svg class="a" style="left:869px;top:426px" width="10" height="8" viewBox="0 0 10 8"><path d="M1.5 2 L5 5.5 L8.5 2" stroke="#c4c2b4" stroke-width="2.4" fill="none"/></svg>
<div class="a" style="left:698px;top:214px;width:167px;height:27px;background:#fff;border-top:2px solid #948f80;border-bottom:1px solid #f0eee4;border-right:1px solid #e4e2d8"></div>
<svg class="a" style="left:703px;top:218px" width="25" height="21" viewBox="0 0 25 21"><rect x=".5" y=".5" width="17.5" height="17" rx="1" fill="#e6e6e6" stroke="#7c9ca8"/><rect x="1" y="1" width="16.5" height="3.5" fill="#b8d8e0"/><rect x="1" y="4.5" width="16.5" height=".8" fill="#7c9ca8"/><rect x="5" y="1.5" width="3" height="2.5" fill="#98a8b0"/><rect x="8.5" y="1.5" width="3" height="2.5" fill="#98a8b0"/><rect x="12" y="1.5" width="2.5" height="2.5" fill="#e03828"/><rect x="15" y="1.5" width="2.5" height="2.5" fill="#e03828"/><rect x="4" y="9" width="10" height="5.5" fill="#e8f8fc" stroke="#98d0e0" stroke-width=".9"/><rect x="6.5" y="10.8" width="5" height="2" fill="#707070"/><path d="M19 16.5 H24 L21.5 19.5Z" fill="#000"/></svg>
<svg class="a" style="left:730px;top:218px" width="25" height="21" viewBox="0 0 25 21"><rect x=".5" y=".5" width="17.5" height="17" rx=".8" fill="#fff" stroke="#7c9ca8"/><rect x="2" y="2" width="9" height="3" fill="#7c9cac"/><rect x="2" y="6.5" width="9" height="2.5" fill="#b0c4c8"/><rect x="2" y="10.5" width="9" height="2.5" fill="#b0c4c8"/><rect x="2" y="14.5" width="9" height="2.5" fill="#b0c4c8"/><path d="M12.5 1 V17.5" stroke="#7c9ca8"/><path d="M13.5 4.5 L15.2 2.3 L17 4.5Z M13.5 13.8 L15.2 16 L17 13.8Z" fill="#305868"/><path d="M13.5 5.5 H17 M13.5 8 H17 M13.5 10.5 H17 M13.5 12.8 H17" stroke="#90a8c8" stroke-width=".8"/><path d="M19 16.5 H24 L21.5 19.5Z" fill="#000"/></svg>
<div class="a" style="left:755px;top:218px;width:107px;height:19px;background:#316ac5"></div>
<div class="t" style="left:759px;top:222px;font-size:12px;color:#fff">Angestellte</div>
<div class="a" style="left:698px;top:241px;width:167px;height:27px;background:#fff;border-top:2px solid #948f80;border-bottom:1px solid #f0eee4;border-right:1px solid #e4e2d8"></div>
<svg class="a" style="left:703px;top:245px" width="25" height="21" viewBox="0 0 25 21"><rect x=".5" y=".5" width="17.5" height="17" rx="1" fill="#e6e6e6" stroke="#7c9ca8"/><rect x="1" y="1" width="16.5" height="3.5" fill="#b8d8e0"/><rect x="1" y="4.5" width="16.5" height=".8" fill="#7c9ca8"/><rect x="5" y="1.5" width="3" height="2.5" fill="#98a8b0"/><rect x="8.5" y="1.5" width="3" height="2.5" fill="#98a8b0"/><rect x="12" y="1.5" width="2.5" height="2.5" fill="#e03828"/><rect x="15" y="1.5" width="2.5" height="2.5" fill="#e03828"/><rect x="4" y="9" width="10" height="5.5" fill="#e8f8fc" stroke="#98d0e0" stroke-width=".9"/><rect x="6.5" y="10.8" width="5" height="2" fill="#707070"/><path d="M19 16.5 H24 L21.5 19.5Z" fill="#000"/></svg>
<svg class="a" style="left:730px;top:245px" width="25" height="21" viewBox="0 0 25 21"><rect x=".5" y=".5" width="17.5" height="17" rx=".8" fill="#fff" stroke="#7c9ca8"/><rect x="2" y="2" width="9" height="3" fill="#7c9cac"/><rect x="2" y="6.5" width="9" height="2.5" fill="#b0c4c8"/><rect x="2" y="10.5" width="9" height="2.5" fill="#b0c4c8"/><rect x="2" y="14.5" width="9" height="2.5" fill="#b0c4c8"/><path d="M12.5 1 V17.5" stroke="#7c9ca8"/><path d="M13.5 4.5 L15.2 2.3 L17 4.5Z M13.5 13.8 L15.2 16 L17 13.8Z" fill="#305868"/><path d="M13.5 5.5 H17 M13.5 8 H17 M13.5 10.5 H17 M13.5 12.8 H17" stroke="#90a8c8" stroke-width=".8"/><path d="M19 16.5 H24 L21.5 19.5Z" fill="#000"/></svg>
<div class="a" style="left:755px;top:243px;width:107px;height:24px;overflow:hidden"><div class="t" style="left:4px;top:6px;font-size:12px;letter-spacing:0.2px">Angestellte_Kinder</div></div>
<div class="a" style="left:698px;top:268px;width:167px;height:27px;background:#fff;border-top:2px solid #948f80;border-bottom:1px solid #f0eee4;border-right:1px solid #e4e2d8"></div>
<svg class="a" style="left:703px;top:272px" width="25" height="21" viewBox="0 0 25 21"><rect x=".5" y=".5" width="17.5" height="17" rx="1" fill="#e6e6e6" stroke="#7c9ca8"/><rect x="1" y="1" width="16.5" height="3.5" fill="#b8d8e0"/><rect x="1" y="4.5" width="16.5" height=".8" fill="#7c9ca8"/><rect x="5" y="1.5" width="3" height="2.5" fill="#98a8b0"/><rect x="8.5" y="1.5" width="3" height="2.5" fill="#98a8b0"/><rect x="12" y="1.5" width="2.5" height="2.5" fill="#e03828"/><rect x="15" y="1.5" width="2.5" height="2.5" fill="#e03828"/><rect x="4" y="9" width="10" height="5.5" fill="#e8f8fc" stroke="#98d0e0" stroke-width=".9"/><rect x="6.5" y="10.8" width="5" height="2" fill="#707070"/><path d="M19 16.5 H24 L21.5 19.5Z" fill="#000"/></svg>
<svg class="a" style="left:730px;top:272px" width="25" height="21" viewBox="0 0 25 21"><rect x=".5" y=".5" width="17.5" height="17" rx=".8" fill="#fff" stroke="#7c9ca8"/><rect x="2" y="2" width="9" height="3" fill="#7c9cac"/><rect x="2" y="6.5" width="9" height="2.5" fill="#b0c4c8"/><rect x="2" y="10.5" width="9" height="2.5" fill="#b0c4c8"/><rect x="2" y="14.5" width="9" height="2.5" fill="#b0c4c8"/><path d="M12.5 1 V17.5" stroke="#7c9ca8"/><path d="M13.5 4.5 L15.2 2.3 L17 4.5Z M13.5 13.8 L15.2 16 L17 13.8Z" fill="#305868"/><path d="M13.5 5.5 H17 M13.5 8 H17 M13.5 10.5 H17 M13.5 12.8 H17" stroke="#90a8c8" stroke-width=".8"/><path d="M19 16.5 H24 L21.5 19.5Z" fill="#000"/></svg>
<div class="a" style="left:755px;top:270px;width:107px;height:24px;overflow:hidden"><div class="t" style="left:4px;top:6px;font-size:12px;letter-spacing:0.2px">Dialoge</div></div>
<div class="a" style="left:698px;top:295px;width:167px;height:27px;background:#fff;border-top:2px solid #948f80;border-bottom:1px solid #f0eee4;border-right:1px solid #e4e2d8"></div>
<svg class="a" style="left:703px;top:299px" width="25" height="21" viewBox="0 0 25 21"><rect x=".5" y=".5" width="17.5" height="17" rx="1" fill="#e6e6e6" stroke="#7c9ca8"/><rect x="1" y="1" width="16.5" height="3.5" fill="#b8d8e0"/><rect x="1" y="4.5" width="16.5" height=".8" fill="#7c9ca8"/><rect x="5" y="1.5" width="3" height="2.5" fill="#98a8b0"/><rect x="8.5" y="1.5" width="3" height="2.5" fill="#98a8b0"/><rect x="12" y="1.5" width="2.5" height="2.5" fill="#e03828"/><rect x="15" y="1.5" width="2.5" height="2.5" fill="#e03828"/><rect x="4" y="9" width="10" height="5.5" fill="#e8f8fc" stroke="#98d0e0" stroke-width=".9"/><rect x="6.5" y="10.8" width="5" height="2" fill="#707070"/><path d="M19 16.5 H24 L21.5 19.5Z" fill="#000"/></svg>
<svg class="a" style="left:730px;top:299px" width="25" height="21" viewBox="0 0 25 21"><rect x=".5" y=".5" width="17.5" height="17" rx=".8" fill="#fff" stroke="#7c9ca8"/><rect x="2" y="2" width="9" height="3" fill="#7c9cac"/><rect x="2" y="6.5" width="9" height="2.5" fill="#b0c4c8"/><rect x="2" y="10.5" width="9" height="2.5" fill="#b0c4c8"/><rect x="2" y="14.5" width="9" height="2.5" fill="#b0c4c8"/><path d="M12.5 1 V17.5" stroke="#7c9ca8"/><path d="M13.5 4.5 L15.2 2.3 L17 4.5Z M13.5 13.8 L15.2 16 L17 13.8Z" fill="#305868"/><path d="M13.5 5.5 H17 M13.5 8 H17 M13.5 10.5 H17 M13.5 12.8 H17" stroke="#90a8c8" stroke-width=".8"/><path d="M19 16.5 H24 L21.5 19.5Z" fill="#000"/></svg>
<div class="a" style="left:755px;top:297px;width:107px;height:24px;overflow:hidden"><div class="t" style="left:4px;top:6px;font-size:12px;letter-spacing:0.2px">Firma</div></div>
<div class="a" style="left:698px;top:322px;width:167px;height:27px;background:#fff;border-top:2px solid #948f80;border-bottom:1px solid #f0eee4;border-right:1px solid #e4e2d8"></div>
<svg class="a" style="left:703px;top:326px" width="25" height="21" viewBox="0 0 25 21"><rect x=".5" y=".5" width="17.5" height="17" rx="1" fill="#e6e6e6" stroke="#7c9ca8"/><rect x="1" y="1" width="16.5" height="3.5" fill="#b8d8e0"/><rect x="1" y="4.5" width="16.5" height=".8" fill="#7c9ca8"/><rect x="5" y="1.5" width="3" height="2.5" fill="#98a8b0"/><rect x="8.5" y="1.5" width="3" height="2.5" fill="#98a8b0"/><rect x="12" y="1.5" width="2.5" height="2.5" fill="#e03828"/><rect x="15" y="1.5" width="2.5" height="2.5" fill="#e03828"/><rect x="4" y="9" width="10" height="5.5" fill="#e8f8fc" stroke="#98d0e0" stroke-width=".9"/><rect x="6.5" y="10.8" width="5" height="2" fill="#707070"/><path d="M19 16.5 H24 L21.5 19.5Z" fill="#000"/></svg>
<svg class="a" style="left:730px;top:326px" width="25" height="21" viewBox="0 0 25 21"><rect x=".5" y=".5" width="17.5" height="17" rx=".8" fill="#fff" stroke="#7c9ca8"/><rect x="2" y="2" width="9" height="3" fill="#7c9cac"/><rect x="2" y="6.5" width="9" height="2.5" fill="#b0c4c8"/><rect x="2" y="10.5" width="9" height="2.5" fill="#b0c4c8"/><rect x="2" y="14.5" width="9" height="2.5" fill="#b0c4c8"/><path d="M12.5 1 V17.5" stroke="#7c9ca8"/><path d="M13.5 4.5 L15.2 2.3 L17 4.5Z M13.5 13.8 L15.2 16 L17 13.8Z" fill="#305868"/><path d="M13.5 5.5 H17 M13.5 8 H17 M13.5 10.5 H17 M13.5 12.8 H17" stroke="#90a8c8" stroke-width=".8"/><path d="M19 16.5 H24 L21.5 19.5Z" fill="#000"/></svg>
<div class="a" style="left:755px;top:324px;width:107px;height:24px;overflow:hidden"><div class="t" style="left:4px;top:6px;font-size:12px;letter-spacing:0.2px">LKZ</div></div>


<!-- DATA WINDOW -->
<div class="a" style="left:22px;top:443px;width:663px;height:406px;background:#0848d8;border-radius:7px 7px 0 0"></div>
<div class="a atitle" style="left:22px;top:443px;width:663px;height:30px;border-radius:7px 7px 0 0"></div>
<div class="a" style="left:22px;top:473px;width:5px;height:376px;background:linear-gradient(90deg,#0000d0 0,#0008d8 1px,#1a6af0 1px,#1060f0 4px,#0050e0 4px)"></div>
<div class="a" style="left:681px;top:473px;width:4px;height:376px;background:linear-gradient(90deg,#0050e0 0,#1060f0 1px,#0a36d8 3px,#0000c8 3px)"></div>
<div class="a" style="left:22px;top:845px;width:663px;height:4px;background:linear-gradient(#1060f0,#0a40d8 2px,#0000c8 3px)"></div>
<svg class="a" style="left:26px;top:449px" width="20" height="20" viewBox="0 0 20 20"><path d="M2 4 L16 2.2 L18 15.8 L4.1 17.6 Z" fill="#18308e" stroke="#c8d4f0" stroke-width=".7"/><path d="M2.8 6.6 L16.4 5.2" stroke="#90a4e8" stroke-width="1"/><path d="M2.5 4.5 L16 3" stroke="#5a70c0" stroke-width=".8"/><path d="M5 17.3 L5.5 15.5 L7 15 L7.2 13.2 L9 12.5 L9.3 10.8 L11 10.2 L11.6 8.6 L13.5 8.2 L14 7 L16.7 6.8 L17.9 15.8 Z" fill="#fff"/><ellipse cx="13.4" cy="14.6" rx="1.8" ry="1.3" fill="#10207a"/><circle cx="6.2" cy="16" r="1" fill="#10207a"/></svg>
<div class="t" style="left:47px;top:453px;font-size:14px;letter-spacing:-0.45px;font-weight:bold;color:#fff;text-shadow:1px 1px 0 #0a2a8a">Personal.4DB - Angestellte: 15 von 15</div>
<div class="ab" style="left:612px;top:449px"></div><div class="gmin" style="left:617px;top:462px;width:7px;height:3px"></div>
<div class="ab" style="left:635px;top:449px"></div><div class="a" style="left:640px;top:454px;width:11px;height:11px;border:1px solid #fff;border-top-width:3px"></div>
<div class="ab abc" style="left:658px;top:449px"></div>
<svg class="a" style="left:662px;top:453px" width="13" height="13" viewBox="0 0 13 13"><path d="M1.5 1.5 L11.5 11.5 M11.5 1.5 L1.5 11.5" stroke="#fff" stroke-width="2.2"/></svg>
<!-- list -->
<div class="a" style="left:27px;top:473px;width:654px;height:372px;background:#ece9d8"></div>
<div class="a" style="left:27px;top:473px;width:654px;height:1px;background:#9a8c6c"></div>
<div class="a" style="left:27px;top:474px;width:638px;height:350px;background:#fff;border-left:1px solid #000;border-top:1px solid #000;border-bottom:2px solid #000"></div>
<div class="a" style="left:28px;top:475px;width:637px;height:23px;background:linear-gradient(#ece9d8 0,#ece9d8 19px,#e2dfcc 20px,#d0ccb8 23px)"></div>
<div class="a" style="left:28px;top:562px;width:637px;height:21px;background:#ece9d8"></div>
<div class="a" style="left:320px;top:474px;width:1px;height:349px;background:#a0a0a0"></div>
<div class="a" style="left:514px;top:474px;width:1px;height:349px;background:#a0a0a0"></div>
<div class="a" style="left:589px;top:474px;width:1px;height:349px;background:#a0a0a0"></div>
<div class="a" style="left:657px;top:474px;width:1px;height:349px;background:#a0a0a0"></div>
<div class="t" style="left:35px;top:482px;font-size:12px">Vorname :</div>
<div class="t" style="left:192px;top:482px;font-size:12px;letter-spacing:0.15px">Nachname :</div>
<div class="t" style="left:347px;top:482px;font-size:12px">Firma :</div>
<div class="t" style="left:521px;top:482px;font-size:12px">Gehalt :</div>
<div class="t" style="left:596px;top:482px;font-size:12px">Kinder :</div>
<div class="t" style="left:29px;top:505px;font-size:12px">Carla</div><div class="t" style="left:192px;top:503px;font-size:12px;letter-spacing:0.15px">Schmidt</div><div class="t" style="left:347px;top:504px;font-size:12px;letter-spacing:0.25px;word-spacing:-1px">Reisebörse</div><div class="t" style="left:520px;top:504px;width:61px;text-align:right;font-size:12px">1500</div><div class="t" style="left:600px;top:504px;width:49px;text-align:right;font-size:12px">0</div>
<div class="t" style="left:29px;top:526px;font-size:12px">Andreas</div><div class="t" style="left:192px;top:524px;font-size:12px;letter-spacing:0.15px">Schwarz</div><div class="t" style="left:347px;top:525px;font-size:12px;letter-spacing:0.25px;word-spacing:-1px">Compu und Soft</div><div class="t" style="left:520px;top:525px;width:61px;text-align:right;font-size:12px">2100</div><div class="t" style="left:600px;top:525px;width:49px;text-align:right;font-size:12px">0</div>
<div class="t" style="left:29px;top:547px;font-size:12px">Vinzenz</div><div class="t" style="left:192px;top:545px;font-size:12px;letter-spacing:0.15px">Lang</div><div class="t" style="left:347px;top:546px;font-size:12px;letter-spacing:0.25px;word-spacing:-1px">Reisebörse</div><div class="t" style="left:520px;top:546px;width:61px;text-align:right;font-size:12px">1800</div><div class="t" style="left:600px;top:546px;width:49px;text-align:right;font-size:12px">0</div>
<div class="t" style="left:29px;top:568px;font-size:12px">Oliver</div><div class="t" style="left:192px;top:566px;font-size:12px;letter-spacing:0.15px">Daunert</div><div class="t" style="left:347px;top:567px;font-size:12px;letter-spacing:0.25px;word-spacing:-1px">Reisebörse</div><div class="t" style="left:520px;top:567px;width:61px;text-align:right;font-size:12px">1300</div><div class="t" style="left:600px;top:567px;width:49px;text-align:right;font-size:12px">0</div>
<div class="t" style="left:29px;top:589px;font-size:12px">Sylvia</div><div class="t" style="left:192px;top:587px;font-size:12px;letter-spacing:0.15px">Galvez</div><div class="t" style="left:347px;top:588px;font-size:12px;letter-spacing:0.25px;word-spacing:-1px">Compu und Soft</div><div class="t" style="left:520px;top:588px;width:61px;text-align:right;font-size:12px">0</div><div class="t" style="left:600px;top:588px;width:49px;text-align:right;font-size:12px">0</div>
<div class="t" style="left:29px;top:610px;font-size:12px">Robert</div><div class="t" style="left:192px;top:608px;font-size:12px;letter-spacing:0.15px">Schreiber</div><div class="t" style="left:347px;top:609px;font-size:12px;letter-spacing:0.25px;word-spacing:-1px">Verlag Encyclopedia</div><div class="t" style="left:520px;top:609px;width:61px;text-align:right;font-size:12px">0</div><div class="t" style="left:600px;top:609px;width:49px;text-align:right;font-size:12px">0</div>
<div class="t" style="left:29px;top:631px;font-size:12px">Arno</div><div class="t" style="left:192px;top:629px;font-size:12px;letter-spacing:0.15px">Müller</div><div class="t" style="left:347px;top:630px;font-size:12px;letter-spacing:0.25px;word-spacing:-1px">Reisebörse</div><div class="t" style="left:520px;top:630px;width:61px;text-align:right;font-size:12px">2000</div><div class="t" style="left:600px;top:630px;width:49px;text-align:right;font-size:12px">0</div>
<div class="t" style="left:29px;top:652px;font-size:12px">Elisabeth</div><div class="t" style="left:192px;top:650px;font-size:12px;letter-spacing:0.15px">Jones</div><div class="t" style="left:347px;top:651px;font-size:12px;letter-spacing:0.25px;word-spacing:-1px">Verlag Encyclopedia</div><div class="t" style="left:520px;top:651px;width:61px;text-align:right;font-size:12px">0</div><div class="t" style="left:600px;top:651px;width:49px;text-align:right;font-size:12px">0</div>
<div class="t" style="left:29px;top:673px;font-size:12px">Viola</div><div class="t" style="left:192px;top:671px;font-size:12px;letter-spacing:0.15px">Faust</div><div class="t" style="left:347px;top:672px;font-size:12px;letter-spacing:0.25px;word-spacing:-1px">Compu und Soft</div><div class="t" style="left:520px;top:672px;width:61px;text-align:right;font-size:12px">0</div><div class="t" style="left:600px;top:672px;width:49px;text-align:right;font-size:12px">0</div>
<div class="t" style="left:29px;top:694px;font-size:12px">Peter</div><div class="t" style="left:192px;top:692px;font-size:12px;letter-spacing:0.15px">Pratts</div><div class="t" style="left:347px;top:693px;font-size:12px;letter-spacing:0.25px;word-spacing:-1px">Compu und Soft</div><div class="t" style="left:520px;top:693px;width:61px;text-align:right;font-size:12px">0</div><div class="t" style="left:600px;top:693px;width:49px;text-align:right;font-size:12px">0</div>
<div class="t" style="left:29px;top:715px;font-size:12px">Otto</div><div class="t" style="left:192px;top:713px;font-size:12px;letter-spacing:0.15px">Obmann</div><div class="t" style="left:347px;top:714px;font-size:12px;letter-spacing:0.25px;word-spacing:-1px">Verlag</div><div class="t" style="left:520px;top:714px;width:61px;text-align:right;font-size:12px">2300</div><div class="t" style="left:600px;top:714px;width:49px;text-align:right;font-size:12px">2</div>
<div class="t" style="left:29px;top:736px;font-size:12px">Antonia</div><div class="t" style="left:192px;top:734px;font-size:12px;letter-spacing:0.15px">Pauli</div><div class="t" style="left:347px;top:735px;font-size:12px;letter-spacing:0.25px;word-spacing:-1px">SPD</div><div class="t" style="left:520px;top:735px;width:61px;text-align:right;font-size:12px">0</div><div class="t" style="left:600px;top:735px;width:49px;text-align:right;font-size:12px">0</div>
<div class="t" style="left:29px;top:757px;font-size:12px">Sabine</div><div class="t" style="left:192px;top:755px;font-size:12px;letter-spacing:0.15px">Kulick</div><div class="t" style="left:347px;top:756px;font-size:12px;letter-spacing:0.25px;word-spacing:-1px">Schule</div><div class="t" style="left:520px;top:756px;width:61px;text-align:right;font-size:12px">0</div><div class="t" style="left:600px;top:756px;width:49px;text-align:right;font-size:12px">0</div>
<div class="t" style="left:29px;top:778px;font-size:12px">Friedrich</div><div class="t" style="left:192px;top:776px;font-size:12px;letter-spacing:0.15px">Ebert</div><div class="t" style="left:347px;top:777px;font-size:12px;letter-spacing:0.25px;word-spacing:-1px">antigone</div><div class="t" style="left:520px;top:777px;width:61px;text-align:right;font-size:12px">1300</div><div class="t" style="left:600px;top:777px;width:49px;text-align:right;font-size:12px">1</div>
<div class="t" style="left:29px;top:799px;font-size:12px">Antonia</div><div class="t" style="left:192px;top:797px;font-size:12px;letter-spacing:0.15px">Gonzales</div><div class="t" style="left:347px;top:798px;font-size:12px;letter-spacing:0.25px;word-spacing:-1px">Anton Gmbh</div><div class="t" style="left:520px;top:798px;width:61px;text-align:right;font-size:12px">1995</div><div class="t" style="left:600px;top:798px;width:49px;text-align:right;font-size:12px">3</div>

<div class="a" style="left:665px;top:474px;width:16px;height:353px;background:#fbfbf6"></div>
<div class="a" style="left:666px;top:475px;width:14px;height:15px;border:1px solid #e4e2d8;border-radius:2px;background:#f0eee4"></div>
<svg class="a" style="left:668px;top:478px" width="10" height="8" viewBox="0 0 10 8"><path d="M1.5 6 L5 2.5 L8.5 6" stroke="#c4c2b4" stroke-width="2.4" fill="none"/></svg>
<div class="a" style="left:666px;top:812px;width:14px;height:15px;border:1px solid #e4e2d8;border-radius:2px;background:#f0eee4"></div>
<svg class="a" style="left:668px;top:816px" width="10" height="8" viewBox="0 0 10 8"><path d="M1.5 2 L5 5.5 L8.5 2" stroke="#c4c2b4" stroke-width="2.4" fill="none"/></svg>
<div class="a" style="left:27px;top:828px;width:638px;height:16px;background:#fcfcf8"></div>
<div class="a" style="left:27px;top:829px;width:15px;height:15px;border:1px solid #b8ccf4;border-radius:2px;background:linear-gradient(135deg,#dae6fc,#b4c8f6)"></div>
<svg class="a" style="left:30px;top:832px" width="8" height="10" viewBox="0 0 8 10"><path d="M6 1.5 L2.5 5 L6 8.5" stroke="#4d6185" stroke-width="2.4" fill="none"/></svg>
<div class="a" style="left:43px;top:829px;width:372px;height:15px;border:1px solid #b0c8f8;border-radius:2px;background:linear-gradient(#d4e0fc,#b8ccf8)"></div>
<svg class="a" style="left:225px;top:832px" width="9" height="8" viewBox="0 0 9 8"><path d="M.5 0V8M2.5 0V8M4.5 0V8M6.5 0V8" stroke="#8ca8e8" stroke-width="1"/></svg>
<div class="a" style="left:647px;top:829px;width:15px;height:15px;border:1px solid #b8ccf4;border-radius:2px;background:linear-gradient(135deg,#dae6fc,#b4c8f6)"></div>
<svg class="a" style="left:651px;top:832px" width="8" height="10" viewBox="0 0 8 10"><path d="M2 1.5 L5.5 5 L2 8.5" stroke="#4d6185" stroke-width="2.4" fill="none"/></svg>
<svg class="a" style="left:667px;top:831px" width="12" height="12" viewBox="0 0 12 12"><g fill="#b8b4a0"><rect x="9" y="1" width="2" height="2"/><rect x="6" y="4" width="2" height="2"/><rect x="9" y="4" width="2" height="2"/><rect x="3" y="7" width="2" height="2"/><rect x="6" y="7" width="2" height="2"/><rect x="9" y="7" width="2" height="2"/></g></svg>

<!-- main toolbar -->
<svg class="a" style="left:4px;top:6px" width="20" height="20" viewBox="0 0 20 20"><path d="M2 4 L16 2.2 L18 15.8 L4.1 17.6 Z" fill="#18308e" stroke="#c8d4f0" stroke-width=".7"/><path d="M2.8 6.6 L16.4 5.2" stroke="#90a4e8" stroke-width="1"/><path d="M2.5 4.5 L16 3" stroke="#5a70c0" stroke-width=".8"/><path d="M5 17.3 L5.5 15.5 L7 15 L7.2 13.2 L9 12.5 L9.3 10.8 L11 10.2 L11.6 8.6 L13.5 8.2 L14 7 L16.7 6.8 L17.9 15.8 Z" fill="#fff"/><ellipse cx="13.4" cy="14.6" rx="1.8" ry="1.3" fill="#10207a"/><circle cx="6.2" cy="16" r="1" fill="#10207a"/></svg>
<svg class="a" style="left:32px;top:60px" width="20" height="24" viewBox="0 0 20 24"><defs><linearGradient id="npg" x1="0" y1="0" x2="1" y2="1"><stop offset="0" stop-color="#fafcff"/><stop offset="1" stop-color="#c4d4f4"/></linearGradient><linearGradient id="nbl" x1="0" y1="0" x2="0" y2="1"><stop offset="0" stop-color="#3050f0"/><stop offset=".5" stop-color="#1424d8"/><stop offset="1" stop-color="#2040f0"/></linearGradient></defs><path d="M.5 .5 H13.5 L18.5 5.5 V22.5 H.5 Z" fill="url(#npg)" stroke="#8098d0"/><path d="M13.5 .5 V5.5 H18.5Z" fill="#98b4ec" stroke="#8098d0" stroke-width=".6"/><rect x="4" y="7" width="11" height="12" fill="url(#nbl)"/><path d="M4 13 Q9.5 10 15 13" stroke="#8090f8" stroke-width=".8" fill="none"/><circle cx="9.5" cy="12.5" r="1.6" fill="#a0a8f8"/></svg>
<div class="arr" style="left:70px;top:77px"></div>
<div class="lbl" style="left:32px;top:90px">Neu</div>
<svg class="a" style="left:109px;top:59px" width="23" height="25" viewBox="0 0 23 25"><path d="M1.5 9 H7 L9 11 H16 V23 H1.5 Z" fill="#e8b838" stroke="#b88818"/><path d="M1 23.5 L5 13 H20 L16 23.5 Z" fill="#fce48a" stroke="#d0a030"/><path d="M3.5 22 L6.5 14.5 H18" stroke="#fff4c0" stroke-width="1" fill="none"/><path d="M8 6 Q10 1 16 1.5 Q19.5 2.5 19.5 7" stroke="#1e8a1e" stroke-width="3.2" fill="none"/><path d="M8 6 Q10 1 16 1.5 Q19.5 2.5 19.5 7" stroke="#50c040" stroke-width="1.6" fill="none"/><path d="M15.5 6.5 H22.5 L19 11.5Z" fill="#3cb030" stroke="#1e7a1e" stroke-width=".8"/></svg>
<div class="arr" style="left:149px;top:77px"></div>
<div class="lbl" style="left:103px;top:90px">Öffnen</div>
<div class="sep" style="left:165px;top:55px;height:49px;background:linear-gradient(90deg,#aaa694 1px,#fff 1px)"></div>
<svg class="a" style="left:189px;top:60px" width="26" height="24" viewBox="0 0 26 24"><defs><linearGradient id="sq" x1="0" y1="0" x2="1" y2="1"><stop offset="0" stop-color="#80c0f8"/><stop offset="1" stop-color="#1060c8"/></linearGradient><linearGradient id="pen" x1="0" y1="0" x2="0" y2="1"><stop offset="0" stop-color="#fff8a0"/><stop offset=".5" stop-color="#f8d820"/><stop offset="1" stop-color="#c89000"/></linearGradient></defs><path d="M1 .5 L23 22.5 H1 Z" fill="url(#sq)" stroke="#1858b0" stroke-width="1"/><path d="M5 10.5 L13 18.5 H5 Z" fill="#f4f8f8" stroke="#3080d0" stroke-width=".8"/><path d="M7 8.5 H24.5 V10.5" stroke="#901000" stroke-width="1" fill="none"/><path d="M8 6 H24 V10 H8 Z" fill="url(#pen)"/><path d="M23 6 H25 V10.5 H23Z" fill="#e02010"/><path d="M8 6 L3 8 L8 10 Z" fill="#f0d0a0" stroke="#806040" stroke-width=".5"/><path d="M3 8 L4.5 7.4 V8.6Z" fill="#202020"/></svg>
<div class="lbl" style="left:183px;top:90px">Struktur</div>
<svg class="a" style="left:263px;top:59px" width="25" height="25" viewBox="0 0 25 25"><path d="M12.50 5.50 L12.50 3.50" stroke="#c09020" stroke-width="1"/><rect x="11.20" y="0.70" width="2.6" height="3" rx=".8" transform="rotate(0 12.50 2.20)" fill="#f4cc48" stroke="#a88018" stroke-width=".7"/><path d="M17.45 7.55 L18.86 6.14" stroke="#c09020" stroke-width="1"/><rect x="18.48" y="3.72" width="2.6" height="3" rx=".8" transform="rotate(45 19.78 5.22)" fill="#f4cc48" stroke="#a88018" stroke-width=".7"/><path d="M19.50 12.50 L21.50 12.50" stroke="#c09020" stroke-width="1"/><rect x="21.50" y="11.00" width="2.6" height="3" rx=".8" transform="rotate(90 22.80 12.50)" fill="#f4cc48" stroke="#a88018" stroke-width=".7"/><path d="M17.45 17.45 L18.86 18.86" stroke="#c09020" stroke-width="1"/><rect x="18.48" y="18.28" width="2.6" height="3" rx=".8" transform="rotate(135 19.78 19.78)" fill="#f4cc48" stroke="#a88018" stroke-width=".7"/><path d="M12.50 19.50 L12.50 21.50" stroke="#c09020" stroke-width="1"/><rect x="11.20" y="21.30" width="2.6" height="3" rx=".8" transform="rotate(180 12.50 22.80)" fill="#f4cc48" stroke="#a88018" stroke-width=".7"/><path d="M7.55 17.45 L6.14 18.86" stroke="#c09020" stroke-width="1"/><rect x="3.92" y="18.28" width="2.6" height="3" rx=".8" transform="rotate(225 5.22 19.78)" fill="#f4cc48" stroke="#a88018" stroke-width=".7"/><path d="M5.50 12.50 L3.50 12.50" stroke="#c09020" stroke-width="1"/><rect x="0.90" y="11.00" width="2.6" height="3" rx=".8" transform="rotate(270 2.20 12.50)" fill="#f4cc48" stroke="#a88018" stroke-width=".7"/><path d="M7.55 7.55 L6.14 6.14" stroke="#c09020" stroke-width="1"/><rect x="3.92" y="3.72" width="2.6" height="3" rx=".8" transform="rotate(315 5.22 5.22)" fill="#f4cc48" stroke="#a88018" stroke-width=".7"/><circle cx="12.5" cy="12.5" r="6.2" fill="#fff8d8" stroke="#f0c020" stroke-width="2.4"/><circle cx="12.5" cy="12.5" r="7.4" fill="none" stroke="#b08818" stroke-width=".6"/><circle cx="12.5" cy="12.5" r="3.2" fill="#fff4c8" stroke="#e0b020" stroke-width="1"/><path d="M12.5 11 L14 13.5 H11Z" fill="#d0a020"/></svg>
<div class="lbl" style="left:256px;top:90px">Explorer</div>
<svg class="a" style="left:340px;top:59px" width="22" height="25" viewBox="0 0 22 25"><path d="M3 1 Q5 1 5 3 V13 H3 V3 Q3 1 3 1Z" fill="#a8b0d8" stroke="#6870a0" stroke-width=".8"/><rect x="1.5" y="13" width="5" height="4" fill="#d83818" stroke="#902010" stroke-width=".6"/><rect x="1.5" y="16.5" width="5" height="7.5" rx="1.5" fill="#f8c818" stroke="#b08000" stroke-width=".6"/><path d="M8.5 5 Q9 1.5 13 1.5 H17 Q20 2 21 6 L19.5 6 Q18 4.5 16 4.5 H15 V4.5 Z" fill="#a8b0d8" stroke="#6870a0" stroke-width=".8"/><rect x="12" y="4" width="3" height="10" fill="#a0a8d0" stroke="#6870a0" stroke-width=".6"/><rect x="11.5" y="13" width="4" height="11" rx="1" fill="#d02818" stroke="#801008" stroke-width=".7"/></svg>
<div class="lbl" style="left:332px;top:90px">Toolbox</div>
<svg class="a" style="left:413px;top:60px" width="25" height="25" viewBox="0 0 25 25"><defs><radialGradient id="cog" cx=".5" cy=".45" r=".5"><stop offset="0" stop-color="#f8c080"/><stop offset="1" stop-color="#e88840"/></radialGradient></defs><circle cx="12.5" cy="12.5" r="11.3" fill="#d84020" stroke="#a02010" stroke-width="1"/><circle cx="12.5" cy="12.5" r="9" fill="url(#cog)" stroke="#b83818" stroke-width=".8"/><path d="M14.50 12.50 L21.00 12.50 M14.35 13.27 L20.35 15.75 M13.91 13.91 L18.51 18.51 M13.27 14.35 L15.75 20.35 M12.50 14.50 L12.50 21.00 M11.73 14.35 L9.25 20.35 M11.09 13.91 L6.49 18.51 M10.65 13.27 L4.65 15.75 M10.50 12.50 L4.00 12.50 M10.65 11.73 L4.65 9.25 M11.09 11.09 L6.49 6.49 M11.73 10.65 L9.25 4.65 M12.50 10.50 L12.50 4.00 M13.27 10.65 L15.75 4.65 M13.91 11.09 L18.51 6.49 M14.35 11.73 L20.35 9.25 " stroke="#805060" stroke-width=".7"/><circle cx="12.5" cy="12.5" r="2.5" fill="#305878"/><circle cx="12" cy="12" r=".9" fill="#c0e0f0"/></svg>
<div class="arr" style="left:458px;top:77px"></div>
<div class="lbl" style="left:406px;top:90px">Compiler</div>
<div class="sep" style="left:474px;top:55px;height:49px;background:linear-gradient(90deg,#aaa694 1px,#fff 1px)"></div>
<svg class="a" style="left:483px;top:62px" width="24" height="23" viewBox="0 0 24 23"><path d="M2 21 L9 14" stroke="#d07820" stroke-width="3.5" stroke-linecap="round"/><circle cx="15" cy="8" r="6.5" fill="#d8ecfc" stroke="#7898b8" stroke-width="1.6"/><path d="M11 6 Q13 3 16 3.5" stroke="#fff" stroke-width="1.5" fill="none"/></svg>
<div class="a" style="left:515px;top:65px;width:105px;height:20px;border:1px solid #7f9db9;background:#fff"></div>
<div class="a" style="left:605px;top:67px;width:14px;height:16px;background:linear-gradient(#c6d6fc,#a8c0f8);border-radius:1px"></div>
<svg class="a" style="left:607px;top:72px" width="10" height="7" viewBox="0 0 10 7"><path d="M1.5 1.5 L5 5 L8.5 1.5" stroke="#4d6185" stroke-width="2.4" fill="none"/></svg>
<div class="lbl" style="left:507px;top:90px">Suche in Struktur</div>
<div class="sep" style="left:632px;top:55px;height:49px;background:linear-gradient(90deg,#aaa694 1px,#fff 1px)"></div>
<svg class="a" style="left:663px;top:59px" width="25" height="26" viewBox="0 0 25 26"><g fill="#e8f0fc" stroke="#6a8ac8"><path d="M1 1H12L15 4V17H1Z"/><path d="M5 5H16L19 8V21H5Z"/><path d="M9 9H20L23 12V25H9Z"/></g><g stroke="#7c9ce0"><path d="M11 15H21M11 18H21M11 21H21"/></g></svg>
<div class="arr" style="left:708px;top:77px"></div>
<div class="lbl" style="left:657px;top:90px">Tabellen</div>
<svg class="a" style="left:747px;top:59px" width="25" height="26" viewBox="0 0 25 26"><g fill="#e8f0fc" stroke="#6a8ac8"><path d="M1 1H12L15 4V17H1Z"/><path d="M5 5H16L19 8V21H5Z"/><path d="M9 9H20L23 12V25H9Z"/></g><text x="12" y="22" font-size="11" font-weight="bold" fill="#3a4a80" font-family="Liberation Sans">?</text></svg>
<div class="arr" style="left:789px;top:77px"></div>
<div class="lbl" style="left:742px;top:90px">Suchen</div>
<svg class="a" style="left:826px;top:59px" width="26" height="25" viewBox="0 0 26 25"><path d="M9 3 L22 1.5 L24 20 L11 22 Z" fill="#e4eef8" stroke="#a0b4cc" stroke-width=".8"/><path d="M12 9 L21 8 M12.5 12 L21.5 11 M13 15 L22 14" stroke="#b8c8dc" stroke-width=".8"/><path d="M1.2 16 L5.5 2 L24.5 7.5 Z M5.5 12.5 L7.3 6.5 L15 8.8 Z" fill="#a8acb8" fill-rule="evenodd" stroke="#707888" stroke-width=".7"/><path d="M1.5 20.5 L21 19.5" stroke="#781010" stroke-width="3" stroke-linecap="round"/><path d="M2 19.6 L20 18.8" stroke="#c03030" stroke-width="1"/><path d="M20.5 18 L24 19.5 L20.5 21 Z" fill="#e8c890" stroke="#806040" stroke-width=".5"/></svg>
<div class="arr" style="left:866px;top:77px"></div>
<div class="lbl" style="left:827px;top:90px">Tools</div>
<div class="sep" style="left:882px;top:55px;height:49px;background:linear-gradient(90deg,#aaa694 1px,#fff 1px)"></div>
<svg class="a" style="left:912px;top:59px" width="22" height="26" viewBox="0 0 22 26"><defs><linearGradient id="stg" x1="0" y1="0" x2="1" y2="1"><stop offset="0" stop-color="#a8f080"/><stop offset=".6" stop-color="#40b830"/><stop offset="1" stop-color="#208a18"/></linearGradient></defs><path d="M1.5 1.5 L21.5 13 L1.5 24.5Z" fill="url(#stg)" stroke="#1c6e1c" stroke-linejoin="round"/></svg>
<div class="lbl" style="left:911px;top:90px">Start</div>

</body></html>
